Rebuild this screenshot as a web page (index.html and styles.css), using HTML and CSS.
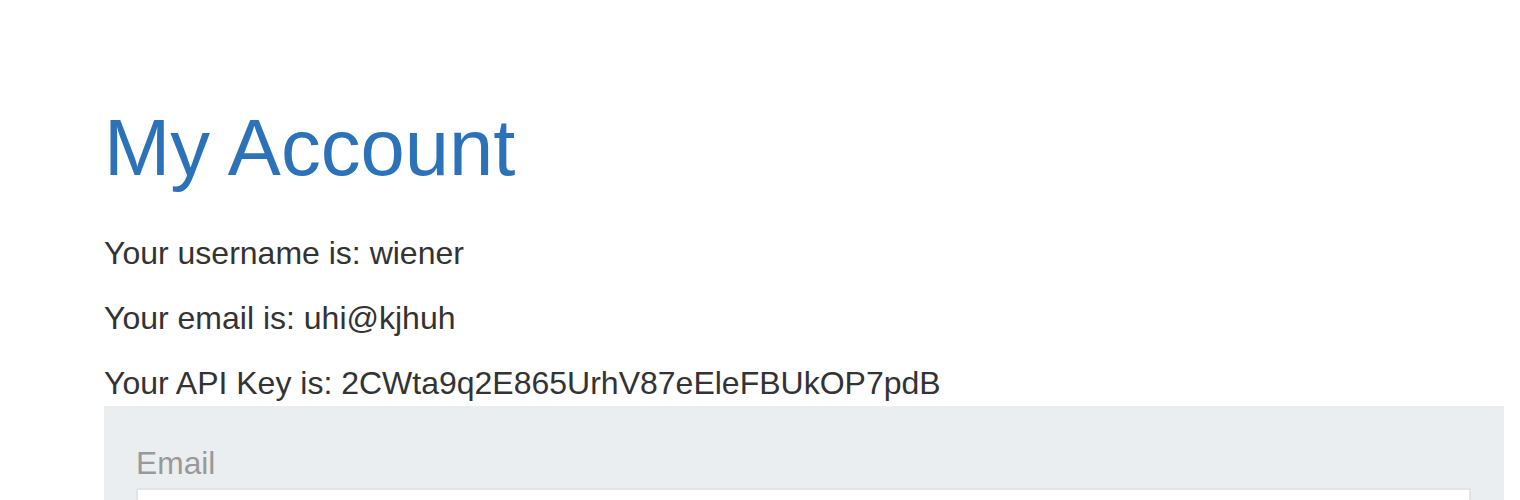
FILE: index.html
```html
<!DOCTYPE html>
<html>
<head>
<meta charset="utf-8">
<title>My Account</title>
<link rel="stylesheet" href="styles.css">
</head>
<body>
<div class="page">
  <h1 class="title">My Account</h1>
  <p class="info">Your username is: wiener</p>
  <p class="info">Your email is: uhi@kjhuh</p>
  <p class="info">Your API Key is: 2CWta9q2E865UrhV87eEleFBUkOP7pdB</p>
  <form class="panel">
    <label class="label" for="email">Email</label>
    <input class="input" id="email" type="email" name="email">
  </form>
</div>
</body>
</html>
```
FILE: styles.css
```css
html, body {
  margin: 0;
  padding: 0;
  background: #ffffff;
}
body {
  font-family: "Liberation Sans", Arial, sans-serif;
  color: #333333;
}
.page {
  padding: 103px 16px 0 104px;
}
.title {
  margin: 0 0 38px 0;
  font-size: 79.6px;
  line-height: 90px;
  font-weight: normal;
  color: #2c72b8;
}
.info {
  margin: 0 0 20px 0;
  font-size: 32px;
  line-height: 45px;
}
.info:last-of-type {
  margin-bottom: 0;
}
.panel {
  background: #ebeef1;
  padding: 35px 33px 40px 32px;
  margin: 0;
}
.label {
  display: block;
  font-size: 31.75px;
  line-height: 45px;
  color: #999999;
  margin-bottom: 2px;
}
.input {
  display: block;
  box-sizing: border-box;
  width: 100%;
  height: 64px;
  margin: 0;
  background: #ffffff;
  border: 2px solid #e4e4e4;
  border-radius: 0;
}
```
